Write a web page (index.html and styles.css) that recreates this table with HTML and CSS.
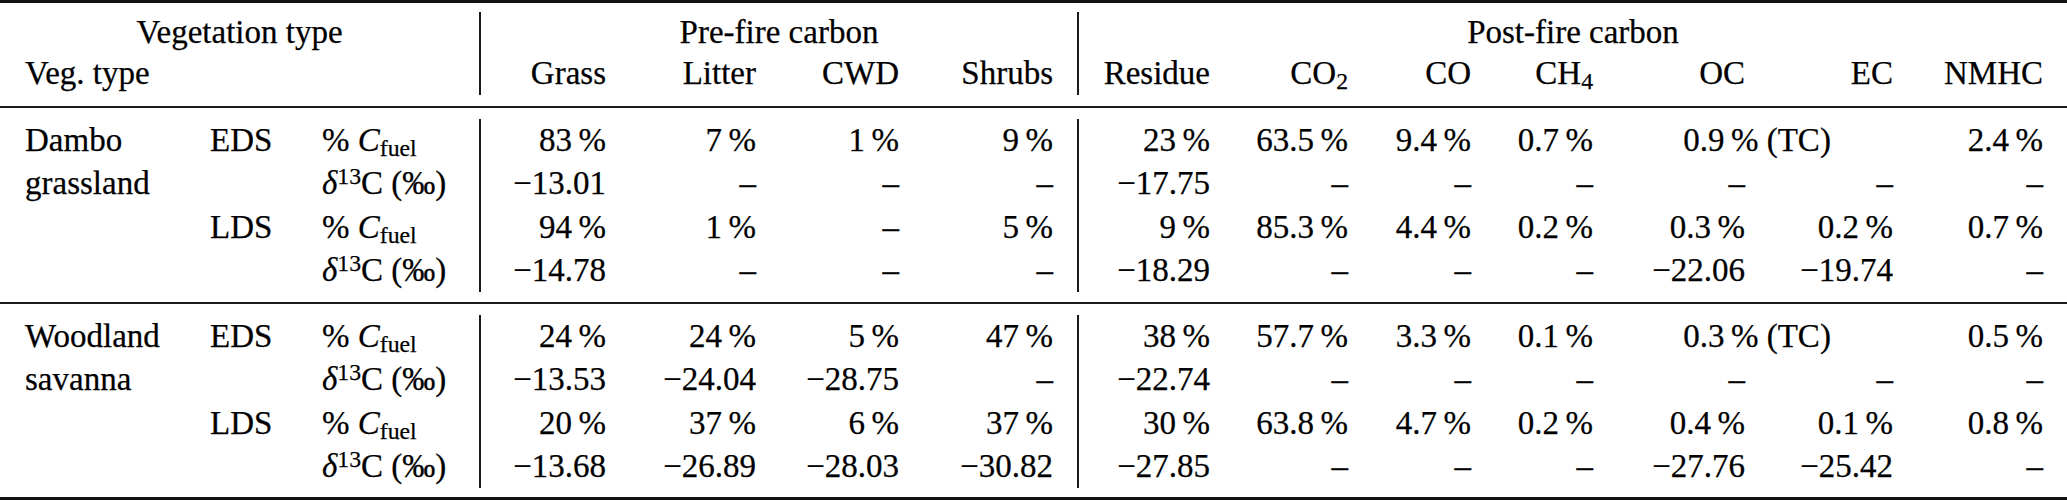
FILE: index.html
```html
<!DOCTYPE html>
<html lang="en">
<head>
<meta charset="utf-8">
<title>Carbon table</title>
<link rel="stylesheet" href="styles.css">
</head>
<body>
<div class="tbl">
  <div class="rule heavy"></div>
  <div class="sec head">
    <div class="c ctr s3">Vegetation type</div>
    <div class="c ctr s4 vr">Pre-fire carbon</div>
    <div class="c ctr s7 vr">Post-fire carbon</div>

    <div class="c l nw">Veg. type</div>
    <div class="c"></div>
    <div class="c"></div>
    <div class="c r vr">Grass</div>
    <div class="c r">Litter</div>
    <div class="c r">CWD</div>
    <div class="c r">Shrubs</div>
    <div class="c r vr">Residue</div>
    <div class="c r">CO<span class="sub">2</span></div>
    <div class="c r">CO</div>
    <div class="c r">CH<span class="sub">4</span></div>
    <div class="c r">OC</div>
    <div class="c r">EC</div>
    <div class="c r">NMHC</div>
  </div>
  <div class="rule"></div>
  <div class="sec body">
    <div class="c l">Dambo</div>
    <div class="c l">EDS</div>
    <div class="c l">% <i>C</i><span class="sub">fuel</span></div>
    <div class="c r vr">83&thinsp;%</div>
    <div class="c r">7&thinsp;%</div>
    <div class="c r">1&thinsp;%</div>
    <div class="c r">9&thinsp;%</div>
    <div class="c r vr">23&thinsp;%</div>
    <div class="c r">63.5&thinsp;%</div>
    <div class="c r">9.4&thinsp;%</div>
    <div class="c r">0.7&thinsp;%</div>
    <div class="c ctr s2 tc">0.9&thinsp;% (TC)</div>
    <div class="c r">2.4&thinsp;%</div>

    <div class="c l">grassland</div>
    <div class="c"></div>
    <div class="c l"><i>δ</i><span class="sup">13</span>C (‰)</div>
    <div class="c r vr">−13.01</div>
    <div class="c r">–</div>
    <div class="c r">–</div>
    <div class="c r">–</div>
    <div class="c r vr">−17.75</div>
    <div class="c r">–</div>
    <div class="c r">–</div>
    <div class="c r">–</div>
    <div class="c r">–</div>
    <div class="c r">–</div>
    <div class="c r">–</div>

    <div class="c"></div>
    <div class="c l">LDS</div>
    <div class="c l">% <i>C</i><span class="sub">fuel</span></div>
    <div class="c r vr">94&thinsp;%</div>
    <div class="c r">1&thinsp;%</div>
    <div class="c r">–</div>
    <div class="c r">5&thinsp;%</div>
    <div class="c r vr">9&thinsp;%</div>
    <div class="c r">85.3&thinsp;%</div>
    <div class="c r">4.4&thinsp;%</div>
    <div class="c r">0.2&thinsp;%</div>
    <div class="c r">0.3&thinsp;%</div>
    <div class="c r">0.2&thinsp;%</div>
    <div class="c r">0.7&thinsp;%</div>

    <div class="c"></div>
    <div class="c"></div>
    <div class="c l"><i>δ</i><span class="sup">13</span>C (‰)</div>
    <div class="c r vr">−14.78</div>
    <div class="c r">–</div>
    <div class="c r">–</div>
    <div class="c r">–</div>
    <div class="c r vr">−18.29</div>
    <div class="c r">–</div>
    <div class="c r">–</div>
    <div class="c r">–</div>
    <div class="c r">−22.06</div>
    <div class="c r">−19.74</div>
    <div class="c r">–</div>
  </div>
  <div class="rule"></div>
  <div class="sec body last">
    <div class="c l">Woodland</div>
    <div class="c l">EDS</div>
    <div class="c l">% <i>C</i><span class="sub">fuel</span></div>
    <div class="c r vr">24&thinsp;%</div>
    <div class="c r">24&thinsp;%</div>
    <div class="c r">5&thinsp;%</div>
    <div class="c r">47&thinsp;%</div>
    <div class="c r vr">38&thinsp;%</div>
    <div class="c r">57.7&thinsp;%</div>
    <div class="c r">3.3&thinsp;%</div>
    <div class="c r">0.1&thinsp;%</div>
    <div class="c ctr s2 tc">0.3&thinsp;% (TC)</div>
    <div class="c r">0.5&thinsp;%</div>

    <div class="c l">savanna</div>
    <div class="c"></div>
    <div class="c l"><i>δ</i><span class="sup">13</span>C (‰)</div>
    <div class="c r vr">−13.53</div>
    <div class="c r">−24.04</div>
    <div class="c r">−28.75</div>
    <div class="c r">–</div>
    <div class="c r vr">−22.74</div>
    <div class="c r">–</div>
    <div class="c r">–</div>
    <div class="c r">–</div>
    <div class="c r">–</div>
    <div class="c r">–</div>
    <div class="c r">–</div>

    <div class="c"></div>
    <div class="c l">LDS</div>
    <div class="c l">% <i>C</i><span class="sub">fuel</span></div>
    <div class="c r vr">20&thinsp;%</div>
    <div class="c r">37&thinsp;%</div>
    <div class="c r">6&thinsp;%</div>
    <div class="c r">37&thinsp;%</div>
    <div class="c r vr">30&thinsp;%</div>
    <div class="c r">63.8&thinsp;%</div>
    <div class="c r">4.7&thinsp;%</div>
    <div class="c r">0.2&thinsp;%</div>
    <div class="c r">0.4&thinsp;%</div>
    <div class="c r">0.1&thinsp;%</div>
    <div class="c r">0.8&thinsp;%</div>

    <div class="c"></div>
    <div class="c"></div>
    <div class="c l"><i>δ</i><span class="sup">13</span>C (‰)</div>
    <div class="c r vr">−13.68</div>
    <div class="c r">−26.89</div>
    <div class="c r">−28.03</div>
    <div class="c r">−30.82</div>
    <div class="c r vr">−27.85</div>
    <div class="c r">–</div>
    <div class="c r">–</div>
    <div class="c r">–</div>
    <div class="c r">−27.76</div>
    <div class="c r">−25.42</div>
    <div class="c r">–</div>
  </div>
  <div class="rule heavy"></div>
</div>
</body>
</html>
```

FILE: styles.css
```css
html, body {
  margin: 0;
  padding: 0;
  background: #ffffff;
}

.tbl {
  width: 2067px;
  font-family: "Liberation Serif", Tinos, "Times New Roman", Times, "Nimbus Roman", "DejaVu Serif", serif;
  font-size: 33px;
  color: #000000;
  -webkit-text-stroke: 0.25px #000000;
}

.rule {
  height: 2px;
  background: #1a1a1a;
}

.rule.heavy {
  height: 3px;
  background: #111111;
}

.sec {
  display: grid;
  grid-template-columns: 185px 112px 182px 151px 150px 143px 154px 157px 138px 123px 122px 152px 148px 150px;
}

.sec.head {
  padding: 9px 0 11px;
  grid-template-rows: 41px 42px;
}

.sec.body {
  padding: 11px 0 10px;
  grid-auto-rows: 43.25px;
}

.sec.body.last {
  padding-bottom: 9px;
}

.head .c {
  line-height: 41px;
}

.body .c {
  line-height: 43.25px;
}

.c {
  box-sizing: border-box;
  white-space: nowrap;
  min-width: 0;
}

.c.l {
  text-align: left;
  padding-left: 25px;
}

.c.r {
  text-align: right;
  padding-right: 24px;
}

.c.ctr {
  text-align: center;
}

.c.nw {
  overflow: visible;
}

.c.vr {
  border-left: 2px solid #1a1a1a;
}

.s2 { grid-column: span 2; }
.s3 { grid-column: span 3; }
.s4 { grid-column: span 4; }
.s7 { grid-column: span 7; }

.c.tc {
  padding-left: 25px;
  padding-right: 45px;
}

.sub {
  font-size: 0.72em;
  vertical-align: -0.22em;
  line-height: 0;
}

.sup {
  font-size: 0.72em;
  vertical-align: 0.42em;
  line-height: 0;
}

i {
  font-style: italic;
}
```
